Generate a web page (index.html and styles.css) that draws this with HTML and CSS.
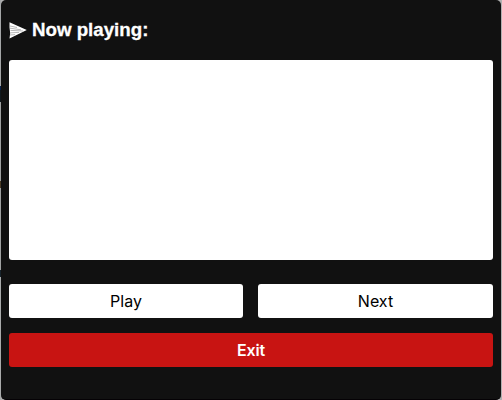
FILE: index.html
```
<!DOCTYPE html>
<html lang="en">
<head>
<meta charset="utf-8">
<title>Now playing</title>
<link rel="stylesheet" href="styles.css">
</head>
<body>
<main class="window">
  <h1 class="title">
    <svg class="arrow" viewBox="0 0 18 17" aria-hidden="true">
      <path class="arrow-fill" d="M0.5 0.3 L17.8 8 L0.5 16.5 L1.2 11 L0.5 5.5 Z"/>
      <path class="arrow-lines" d="M1 4 L8 5.5 M1 6.2 L12 7.8 M1.5 8.4 L14 9 M1.5 10.8 L10 10.4 M1 13 L6 12.6"/>
    </svg>
    <span class="title-text">Now playing:</span>
  </h1>
  <div class="screen"></div>
  <div class="controls">
    <button class="button play">Play</button>
    <button class="button next">Next</button>
  </div>
  <button class="button exit">Exit</button>
</main>
</body>
</html>
```
FILE: styles.css
```
* {
  box-sizing: border-box;
}

body {
  margin: 0;
  height: 400px;
  padding: 0 1px;
  overflow: hidden;
  background: linear-gradient(#a4a6a7 0 86px, #08214b 86px 90px, #10181d 90px 102px, #a0a2a2 102px 181px, #4a3b25 181px 188px, #a0a2a2 188px 270px, #17232b 270px 277px, #a9abab 277px) left / 1px 100% no-repeat, #b0b0b0;
}

.window {
  height: 400px;
  padding: 0 8px;
  border-bottom: 1px solid #050205;
  border-radius: 5px;
  background: #111;
}

.title {
  display: flex;
  align-items: center;
  gap: 5px;
  height: 60px;
  margin: 0;
  color: #fff;
  font: bold 18.72px/22px "Liberation Sans", Arial, sans-serif;
  -webkit-text-stroke: 0.3px #fff;
}

.arrow {
  width: 18px;
  height: 17px;
}

.arrow-fill {
  fill: #fff;
}

.arrow-lines {
  fill: none;
  stroke: #888;
  stroke-width: 0.6;
}

.screen {
  height: 200px;
  margin-bottom: 24px;
  border-radius: 3px;
  background: #fff;
}

.controls {
  display: grid;
  grid-template-columns: 234px 235px;
  gap: 15px;
  margin-bottom: 15px;
}

.button {
  height: 34px;
  padding: 0;
  border: 0;
  border-radius: 3px;
  background: #fff;
  color: #000;
  font: 16px/34px Inter, sans-serif;
}

.exit {
  display: block;
  width: 484px;
  background: #c81412;
  color: #fff;
  font-weight: 600;
  letter-spacing: -0.2px;
}
```
